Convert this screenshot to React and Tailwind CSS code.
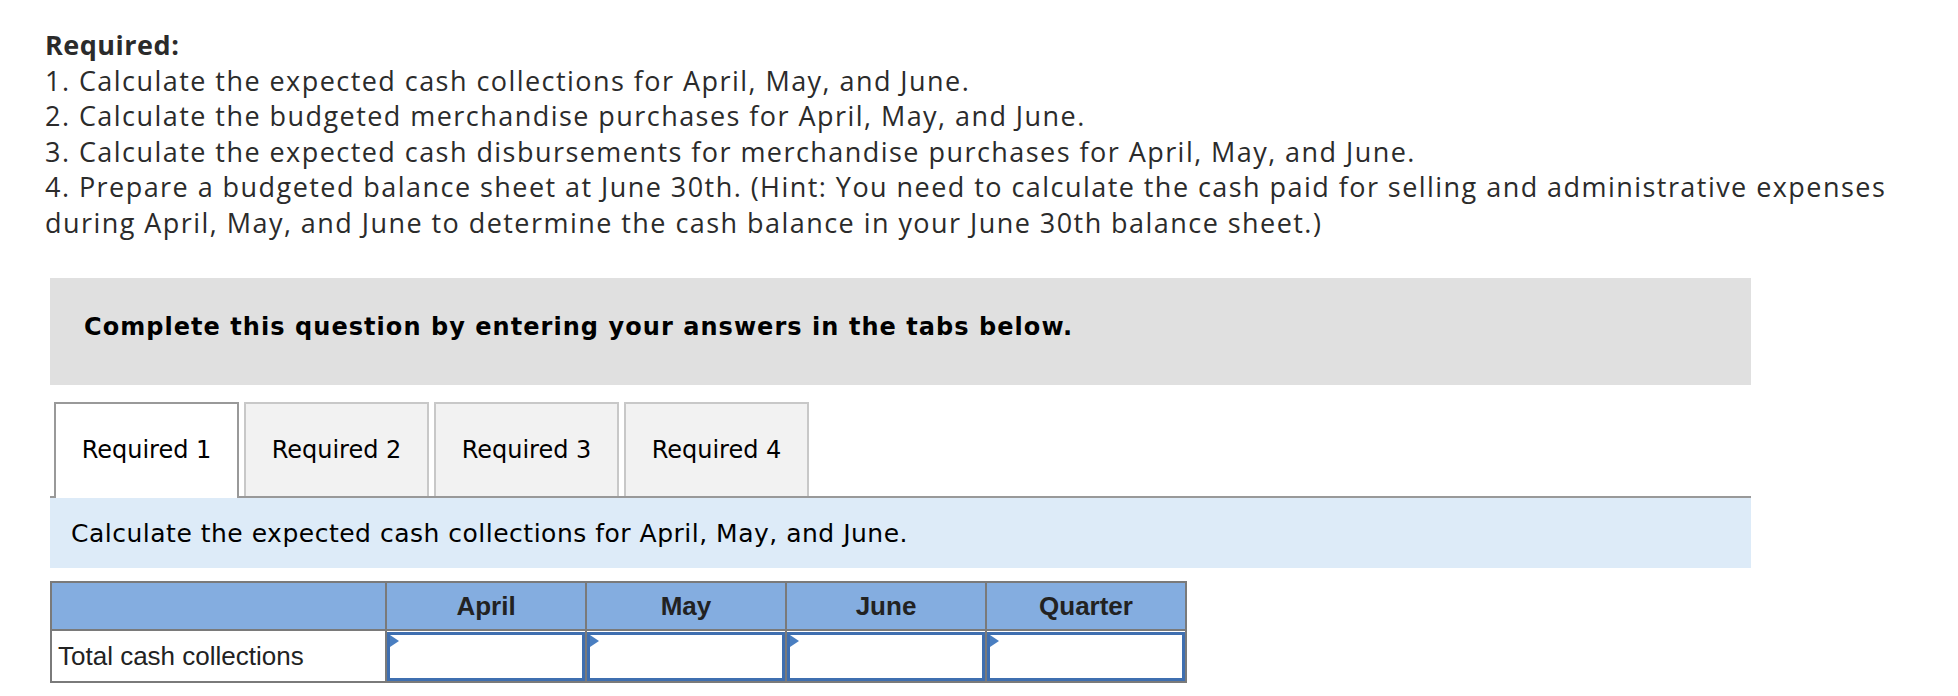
import React from "react";

const months = ["April", "May", "June", "Quarter"];
const tabs = ["Required 1", "Required 2", "Required 3", "Required 4"];

function AnswerCell() {
  return (
    <td className="relative border-2 border-[#7a7a7a] p-0 h-[52px]">
      <input
        type="text"
        className="block w-full h-[49px] border-[3px] border-[#3f6fb0] bg-white outline-none"
      />
      {/* little blue marker in the corner */}
      <span className="absolute left-[3px] top-[4px] w-0 h-0 border-y-[6px] border-y-transparent border-l-[9px] border-l-[#4a7fc1]" />
    </td>
  );
}

export default function App() {
  return (
    <div className="w-[1958px] h-[696px] overflow-hidden bg-white">
      {/* Instructions */}
      <div className="pt-[27px] pl-[45px] text-[27px] leading-[35.5px] tracking-[1.45px] text-[#2b2b2b] font-['Open_Sans',sans-serif] whitespace-nowrap">
        <p className="font-bold tracking-[0.5px]">Required:</p>
        <p>1. Calculate the expected cash collections for April, May, and June.</p>
        <p>2. Calculate the budgeted merchandise purchases for April, May, and June.</p>
        <p>3. Calculate the expected cash disbursements for merchandise purchases for April, May, and June.</p>
        <p>
          4. Prepare a budgeted balance sheet at June 30th. (Hint: You need to calculate the cash paid for selling and administrative expenses
          <br />
          during April, May, and June to determine the cash balance in your June 30th balance sheet.)
        </p>
      </div>

      <div className="ml-[50px] w-[1701px] mt-[38px]">
        {/* Gray banner */}
        <div className="h-[107px] bg-[#e0e0e0] flex items-center pl-[34px] pb-[10px]">
          <span className="font-['DejaVu_Sans',Verdana,sans-serif] font-bold text-[24px] tracking-[1.05px] text-black">
            Complete this question by entering your answers in the tabs below.
          </span>
        </div>

        {/* Tabs */}
        <div className="mt-[15px] flex items-end gap-[5px] pl-[4px] border-b-2 border-[#999]">
          {tabs.map((t, i) => (
            <div
              key={t}
              className={
                i === 0
                  ? "relative top-[2px] w-[185px] h-[96px] bg-white border-2 border-b-0 border-[#999] flex items-center justify-center pb-[2px] font-['DejaVu_Sans',Verdana,sans-serif] text-[24px] text-black"
                  : "w-[185px] h-[94px] bg-[#f2f2f2] border-2 border-b-0 border-[#c8c8c8] flex items-center justify-center font-['DejaVu_Sans',Verdana,sans-serif] text-[24px] text-black"
              }
            >
              {t}
            </div>
          ))}
        </div>

        {/* Instruction bar */}
        <div className="h-[70px] bg-[#ddebf8] flex items-center pl-[21px] pt-[2px]">
          <span className="font-['DejaVu_Sans',Verdana,sans-serif] text-[25px] tracking-[0.5px] text-black">
            Calculate the expected cash collections for April, May, and June.
          </span>
        </div>

        {/* Answer table */}
        <table className="mt-[13px] table-fixed border-collapse w-[1135px] font-['Liberation_Sans',Arial,sans-serif] text-[#222]">
          <colgroup>
            <col className="w-[335px]" />
            <col className="w-[200px]" />
            <col className="w-[200px]" />
            <col className="w-[200px]" />
            <col className="w-[200px]" />
          </colgroup>
          <thead>
            <tr className="h-[48px] bg-[#84ade0]">
              <th className="border-2 border-[#7a7a7a]"></th>
              {months.map((m) => (
                <th key={m} className="border-2 border-[#7a7a7a] text-[26px] font-bold text-center">
                  {m}
                </th>
              ))}
            </tr>
          </thead>
          <tbody>
            <tr className="h-[52px]">
              <td className="border-2 border-[#7a7a7a] pl-[6px] pt-[1px] text-[26px] text-left">Total cash collections</td>
              {months.map((m) => (
                <AnswerCell key={m} />
              ))}
            </tr>
          </tbody>
        </table>
      </div>
    </div>
  );
}
